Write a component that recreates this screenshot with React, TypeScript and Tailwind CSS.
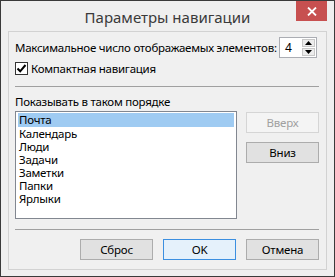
import React from "react";

const font = { fontFamily: '"Noto Sans", "Open Sans", sans-serif' };

function Btn({ children, disabled, primary }: { children: React.ReactNode; disabled?: boolean; primary?: boolean }) {
  const cls = disabled
    ? "border-[#d5d5d5] bg-[#f4f4f4] text-[#a0a0a0]"
    : primary
    ? "border-[#3c8fe0] bg-[#e5f1fb] text-black"
    : "border-[#acacac] bg-[#e1e1e1] text-black";
  return (
    <div className={`w-[73px] h-[21px] border ${cls} flex items-center justify-center text-[11.5px] tracking-[-0.2px] leading-none`}>
      {children}
    </div>
  );
}

export default function App() {
  const items = ["Почта", "Календарь", "Люди", "Задачи", "Заметки", "Папки", "Ярлыки"];
  return (
    <div style={font} className="w-[335px] h-[277px] border border-[#3a3a3a] bg-[#efefef] flex flex-col text-black">
      <div className="relative h-[30px] flex items-center justify-center">
        <span className="text-[15px] text-[#3a3a3a] leading-none mt-[2px] whitespace-nowrap">Параметры навигации</span>
        <div className="absolute top-0 right-[7px] w-[31px] h-[20px] bg-[#c75050] flex items-center justify-center">
          <svg width="10" height="9" viewBox="0 0 10 9">
            <path d="M1 0.5 L9 8.5 M9 0.5 L1 8.5" stroke="white" strokeWidth="1.8" />
          </svg>
        </div>
      </div>
      <div className="ml-[7px] w-[319px] h-[239px] border border-[#d2d2d2] bg-[#f0f0f0] pl-[6px] pr-[7px] flex flex-col text-[11.5px] tracking-[-0.25px]">
        <div className="mt-[5px] h-[21px] flex items-center justify-between pr-[2px]">
          <span className="leading-none whitespace-nowrap">Максимальное число отображаемых элементов:</span>
          <div className="w-[38px] h-[21px] border border-[#abadb3] bg-white flex items-stretch shrink-0">
            <span className="flex-1 text-[12px] leading-[19px] pl-[5px]">4</span>
            <div className="w-[14px] flex flex-col py-[1px] pr-[1px] gap-[1px]">
              <div className="flex-1 bg-[#ececec] border border-[#c8c8c8] flex items-center justify-center">
                <svg width="7" height="4" viewBox="0 0 7 4"><path d="M0 4 L3.5 0 L7 4 Z" fill="black" /></svg>
              </div>
              <div className="flex-1 bg-[#ececec] border border-[#c8c8c8] flex items-center justify-center">
                <svg width="7" height="4" viewBox="0 0 7 4"><path d="M0 0 L7 0 L3.5 4 Z" fill="black" /></svg>
              </div>
            </div>
          </div>
        </div>
        <div className="mt-[4px] flex items-center gap-[3px]">
          <div className="w-[13px] h-[13px] border border-[#333] bg-white flex items-center justify-center">
            <svg width="11" height="11" viewBox="0 0 11 11">
              <path d="M1.5 5.5 L4.2 8.3 L9.5 2" stroke="black" strokeWidth="2" fill="none" />
            </svg>
          </div>
          <span className="leading-none whitespace-nowrap">Компактная навигация</span>
        </div>
        <div className="mt-[11px] h-px bg-[#a0a0a0]" />
        <div className="mt-[7px] leading-[16px] whitespace-nowrap">Показывать в таком порядке</div>
        <div className="mt-[1px] flex justify-between">
          <div className="w-[222px] h-[108px] border border-[#828790] bg-white px-[2px] pt-[1px] flex flex-col">
            {items.map((it, i) => (
              <div
                key={it}
                className={`pl-[1px] whitespace-nowrap ${i === 0 ? "bg-[#9fcbf2] h-[14px] leading-[14px]" : "h-[13px] leading-[13px]"}`}
              >
                {it}
              </div>
            ))}
          </div>
          <div className="flex flex-col gap-[9px] pt-[1px]">
            <Btn disabled>Вверх</Btn>
            <Btn>Вниз</Btn>
          </div>
        </div>
        <div className="mt-[10px] h-px bg-[#a0a0a0]" />
        <div className="mt-[9px] flex justify-end gap-[10px]">
          <Btn>Сброс</Btn>
          <Btn primary>OK</Btn>
          <Btn>Отмена</Btn>
        </div>
      </div>
    </div>
  );
}
